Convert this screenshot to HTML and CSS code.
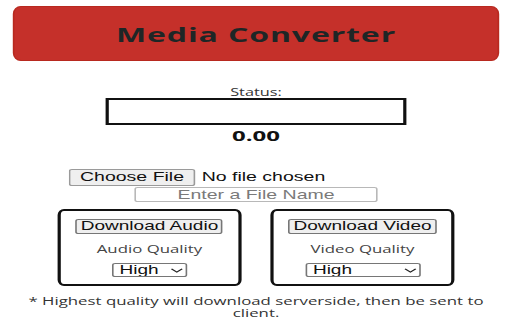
FILE: index.html
```html
<!DOCTYPE html>
<html lang="en">
<head>
<meta charset="utf-8">
<title>Media Converter</title>
<link rel="stylesheet" href="styles.css">
</head>
<body>
<div class="page">
  <header class="banner"><h1 class="title">Media Converter</h1></header>
  <section class="status">
    <div class="status-label">Status:</div>
    <div class="status-box"></div>
    <div class="progress">0.00</div>
  </section>
  <section class="file">
    <input type="file" class="file-input">
    <input type="text" class="name-input" placeholder="Enter a File Name">
  </section>
  <section class="panels">
    <div class="panel">
      <button class="dl-btn" type="button">Download Audio</button>
      <div class="quality-label">Audio Quality</div>
      <span class="select-wrap">
        <select class="quality quality-audio"><option>High</option><option>Low</option></select>
        <svg class="chev" viewBox="0 0 10 6"><path d="M1 1l4 4 4-4" fill="none" stroke="#222" stroke-width="1.2"/></svg>
      </span>
    </div>
    <div class="panel">
      <button class="dl-btn" type="button">Download Video</button>
      <div class="quality-label">Video Quality</div>
      <span class="select-wrap">
        <select class="quality quality-video"><option>High</option><option>Low</option></select>
        <svg class="chev" viewBox="0 0 10 6"><path d="M1 1l4 4 4-4" fill="none" stroke="#222" stroke-width="1.2"/></svg>
      </span>
    </div>
  </section>
  <p class="note">* Highest quality will download serverside, then be sent to client.</p>
</div>
</body>
</html>
```
FILE: styles.css
```css
html, body {
  margin: 0;
  padding: 0;
  overflow: hidden;
  background: #fff;
}

.page {
  width: 320px;
  margin: 0 auto;
  padding: 6px 8px 0;
  box-sizing: border-box;
  transform: scaleX(1.6);
  transform-origin: top center;
  font-family: "Open Sans", "Noto Sans", sans-serif;
  color: #222;
}

.banner {
  height: 55px;
  box-sizing: border-box;
  padding-top: 2px;
  background: #c5302a;
  border: 1px solid #b8291f;
  border-radius: 5px / 8px;
  display: flex;
  align-items: center;
  justify-content: center;
}

.title {
  margin: 0;
  font-size: 20px;
  line-height: 27px;
  font-weight: 700;
  letter-spacing: 0.55px;
  color: #1e2626;
}

.status {
  margin-top: 25px;
  display: flex;
  flex-direction: column;
  align-items: center;
}

.status-label {
  font-size: 10.2px;
  line-height: 12px;
  color: #333;
}

.status-box {
  width: 188px;
  height: 27px;
  box-sizing: border-box;
  border: 2px solid #111;
}

.progress {
  margin-top: 1px;
  font-size: 15px;
  line-height: 18px;
  font-weight: 700;
  color: #111;
}

.file {
  margin-top: 25px;
  display: flex;
  flex-direction: column;
  align-items: center;
}

.file-input {
  width: 234px;
  height: 17px;
  padding: 0;
  margin: 0;
  font: 12.2px/15px "Liberation Sans", Arial, sans-serif;
  color: #111;
}

.file-input::file-selector-button {
  height: 17px;
  box-sizing: border-box;
  padding: 0 6px;
  margin: 0 4px 0 0;
  border: 1px solid #9a9a9a;
  border-radius: 2px;
  background: #efefef;
  font: inherit;
  color: #111;
}

.name-input {
  width: 152.5px;
  height: 15px;
  box-sizing: border-box;
  margin: 1px 0 0;
  padding: 0 4px;
  border: 1px solid #b8b8b8;
  border-radius: 2px;
  font: 12.2px/13px "Liberation Sans", Arial, sans-serif;
  text-align: center;
  color: #111;
  outline: none;
}

.name-input::placeholder {
  color: #7a7a7a;
}

.panels {
  margin-top: 7px;
  display: flex;
  justify-content: center;
  gap: 18.75px;
}

.panel {
  width: 114.4px;
  height: 77px;
  box-sizing: border-box;
  padding-top: 8px;
  border: 2px solid #111;
  border-radius: 4px / 6px;
  display: flex;
  flex-direction: column;
  align-items: center;
}

.dl-btn {
  height: 15px;
  box-sizing: border-box;
  margin: 0;
  padding: 0 2px;
  border: 1px solid #767676;
  border-radius: 2px;
  background: #efefef;
  font: 11.9px/13px "Liberation Sans", Arial, sans-serif;
  color: #111;
}

.quality-label {
  margin-top: 7.5px;
  font-size: 10.5px;
  line-height: 14px;
  color: #444;
}

.select-wrap {
  position: relative;
  display: inline-flex;
  margin-top: 7.5px;
}

.quality {
  height: 14px;
  box-sizing: border-box;
  margin: 0;
  padding: 0 0 0 4px;
  appearance: none;
  -webkit-appearance: none;
  border: 1px solid #767676;
  border-radius: 2px;
  background: #fff;
  font: 11.9px/12px "Liberation Sans", Arial, sans-serif;
  color: #111;
}

.quality-audio {
  width: 47.5px;
}

.quality-video {
  width: 72px;
}

.chev {
  position: absolute;
  right: 2px;
  top: 4.5px;
  width: 9px;
  height: 5px;
  pointer-events: none;
}

.note {
  margin: 8.7px 0 0;
  font-size: 10.5px;
  line-height: 12.5px;
  text-align: center;
  color: #333;
}
```
